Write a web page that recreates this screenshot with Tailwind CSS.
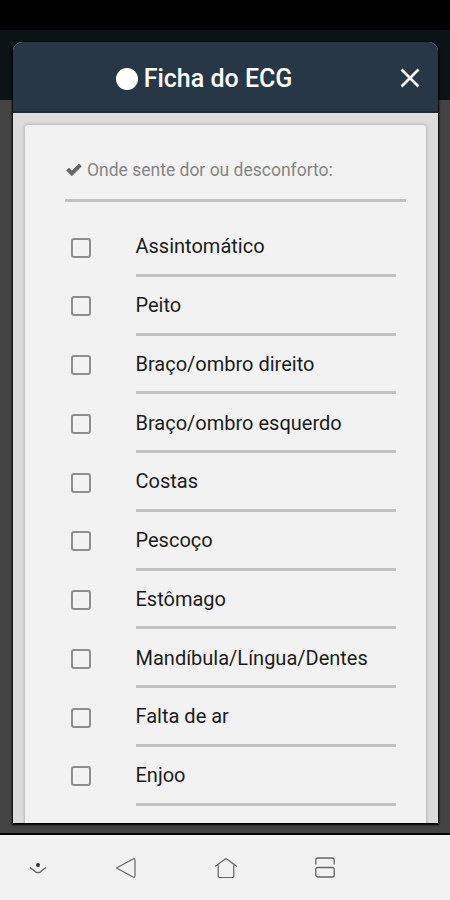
<!DOCTYPE html>
<html lang="pt-BR">
<head>
    <meta charset="UTF-8">
    <meta name="viewport" content="width=device-width, initial-scale=1.0">
    <title>Ficha do ECG</title>
    <script src="https://cdn.jsdelivr.net/npm/@tailwindcss/browser@4"></script>
</head>
<body class="h-[900px] w-[450px] overflow-hidden bg-black font-['Roboto',sans-serif]">

    <div class="relative flex h-[900px] flex-col">
        <!-- Status bar -->
        <div class="h-[30px] bg-black"></div>

        <!-- Page behind the modal -->
        <div class="h-[70px] bg-[#0b1317]"></div>
        <div class="flex-1 bg-[#434343]"></div>

        <!-- Modal -->
        <div class="absolute top-[42px] left-[13px] flex h-[781px] w-[425px] flex-col overflow-hidden rounded-t-[9px] bg-[#dcdcdc] shadow-[0_1px_2px_1px_#000]">
            <header class="grid h-[71px] shrink-0 grid-cols-[56px_1fr_56px] items-center border-b-2 border-[#1c2a40] bg-[#273746] text-white">
                <span></span>
                <h1 class="flex items-center justify-center gap-[6px] pt-[4px] pr-[43px] text-[25px] leading-[30px] font-medium whitespace-nowrap">
                    <span class="size-[22px] rounded-full bg-white"></span>
                    <span>Ficha do ECG</span>
                </h1>
                <button class="flex justify-center pt-[3px]" aria-label="Fechar">
                    <svg class="size-[20px]" viewBox="0 0 20 20" fill="none" stroke="currentColor" stroke-width="2.6">
                        <path d="M1.5 1.5l17 17M18.5 1.5l-17 17"/>
                    </svg>
                </button>
            </header>

            <div class="flex-1 overflow-hidden px-3 pt-3">
                <div class="h-[720px] rounded-t-[3px] bg-[#f2f2f2] pr-[20px] pl-[40px] shadow-[0_0_3px_1px_rgba(0,0,0,0.16)]">
                    <div class="flex h-[77px] items-start border-b-[3px] border-[#c2c2c2] pt-[34px] text-[17.5px] leading-[22px] text-[#858585]">
                        <svg class="mt-[4px] mr-[5px] ml-[1px] h-[13px] w-[16px]" viewBox="0 0 16 13" fill="none" stroke="#666" stroke-width="4">
                            <path d="M1.6 6.2l4.2 4.2L14.4 1.8"/>
                        </svg>
                        <span>Onde sente dor ou desconforto:</span>
                    </div>
                    <ul id="symptoms" class="pt-[16px]"></ul>
                </div>
            </div>
        </div>

        <!-- Android navigation -->
        <nav class="flex h-[67px] border-t-2 border-black bg-[#f2f2f2] text-[#666]">
            <div class="flex w-[76px] items-center justify-center">
                <svg class="h-[12px] w-[18px]" viewBox="0 0 18 12" fill="none" stroke="currentColor" stroke-width="1.4">
                    <path d="M1 5.5l5.5 4.3q2.5 1.6 5 0L17 5.5"/>
                    <circle cx="9" cy="3" r="2" fill="#333" stroke="none"/>
                </svg>
            </div>
            <div class="flex w-[100px] items-center justify-center">
                <svg class="size-[22px]" viewBox="0 0 22 22" fill="none" stroke="currentColor" stroke-width="1.2" stroke-linejoin="round">
                    <path d="M1.5 11L18 2q2-1 2 1.2V18.8q0 2.2-2 1.2z"/>
                </svg>
            </div>
            <div class="flex w-[100px] items-center justify-center">
                <svg class="h-[22px] w-[24px]" viewBox="0 0 24 22" fill="none" stroke="currentColor" stroke-width="1.2" stroke-linejoin="round">
                    <path d="M1 9.5L12 1.5L23 9.5M4.200 7.500V19q0 1.500 1.500 1.500h12.600q1.500 0 1.500-1.500V7.500"/>
                </svg>
            </div>
            <div class="flex w-[98px] items-center justify-center">
                <svg class="h-[21px] w-[20px]" viewBox="0 0 20 21" fill="none" stroke="currentColor" stroke-width="1.3">
                    <path d="M.8 7.500V3q0-2 2-2h14.400q2 0 2 2v4.500"/>
                    <rect x=".8" y="10.500" width="18.400" height="9.500" rx="2"/>
                </svg>
            </div>
        </nav>
    </div>

    <script>
        const symptoms = [
            "Assintomático", "Peito", "Braço/ombro direito", "Braço/ombro esquerdo", "Costas",
            "Pescoço", "Estômago", "Mandíbula/Língua/Dentes", "Falta de ar", "Enjoo"
        ];

        const list = document.getElementById('symptoms');
        for (const symptom of symptoms) {
            const row = document.createElement('li');
            row.className = 'flex h-[58.75px]';

            const box = document.createElement('span');
            box.className = 'mt-[19.5px] ml-[5.5px] size-5 shrink-0 rounded-[3px] border-2 border-[#8e8e8e]';

            const label = document.createElement('span');
            label.className = 'mr-[10px] ml-[45px] flex-1 border-b-[3px] border-[#c2c2c2] pt-[16.25px] text-[20px] leading-[24px] text-[#1c1c1c]';
            label.textContent = symptom;

            row.append(box, label);
            list.appendChild(row);
        }
    </script>
</body>
</html>
